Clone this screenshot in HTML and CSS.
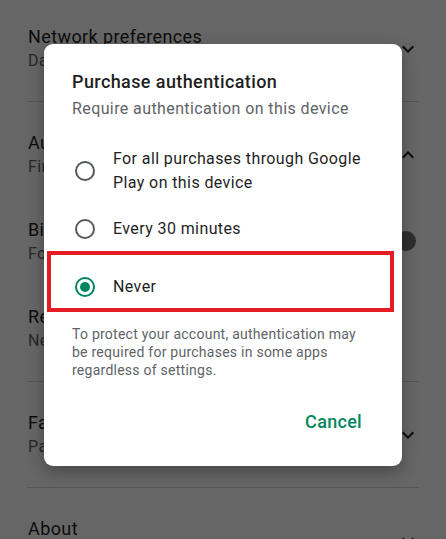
FILE: index.html
```html
<!DOCTYPE html>
<html lang="en">
<head>
    <meta charset="UTF-8">
    <meta name="viewport" content="width=device-width, initial-scale=1.0">
    <title>Settings</title>
    <link rel="stylesheet" href="styles.css">
</head>
<body>
    <div class="settings">
        <div class="section">
            <div class="item">
                <div class="item-text">
                    <div class="item-title">Network preferences</div>
                    <div class="item-sub">Data usage and downloads</div>
                </div>
                <svg class="chevron" viewBox="0 0 24 24"><path d="M16.59 8.59L12 13.17 7.41 8.59 6 10l6 6 6-6z"/></svg>
            </div>
        </div>
        <div class="section">
            <div class="item">
                <div class="item-text">
                    <div class="item-title">Authentication</div>
                    <div class="item-sub">Fingerprint, purchase authentication</div>
                </div>
                <svg class="chevron" viewBox="0 0 24 24"><path d="M7.41 15.41L12 10.83l4.59 4.58L18 14l-6-6-6 6z"/></svg>
            </div>
            <div class="item">
                <div class="item-text">
                    <div class="item-title">Biometric authentication</div>
                    <div class="item-sub">For all purchases on Google Play</div>
                </div>
                <div class="toggle"><span class="thumb"></span></div>
            </div>
            <div class="item">
                <div class="item-text">
                    <div class="item-title">Require authentication for purchases</div>
                    <div class="item-sub">Never</div>
                </div>
            </div>
        </div>
        <div class="section">
            <div class="item">
                <div class="item-text">
                    <div class="item-title">Family</div>
                    <div class="item-sub">Parental controls, family library</div>
                </div>
                <svg class="chevron" viewBox="0 0 24 24"><path d="M16.59 8.59L12 13.17 7.41 8.59 6 10l6 6 6-6z"/></svg>
            </div>
        </div>
        <div class="section">
            <div class="item">
                <div class="item-text">
                    <div class="item-title">About</div>
                    <div class="item-sub">Play Store version</div>
                </div>
                <svg class="chevron" viewBox="0 0 24 24"><path d="M16.59 8.59L12 13.17 7.41 8.59 6 10l6 6 6-6z"/></svg>
            </div>
        </div>
    </div>

    <div class="scrim"></div>

    <div class="dialog">
        <h2 class="dialog-title">Purchase authentication</h2>
        <p class="dialog-sub">Require authentication on this device</p>
        <div class="options">
            <label class="option">
                <span class="radio"></span>
                <span class="option-label">For all purchases through Google Play on this device</span>
            </label>
            <label class="option">
                <span class="radio"></span>
                <span class="option-label">Every 30 minutes</span>
            </label>
            <label class="option">
                <span class="radio checked"></span>
                <span class="option-label">Never</span>
            </label>
        </div>
        <p class="dialog-note">To protect your account, authentication may be required for purchases in some apps regardless of settings.</p>
        <div class="actions">
            <button class="text-btn">Cancel</button>
        </div>
        <div class="highlight"></div>
    </div>
</body>
</html>
```

FILE: styles.css
```css
:root {
    --green: #01875f;
    --text: #1f1f1f;
    --muted: #5f6368;
}

html {
    overflow: hidden;
}

body {
    margin: 0;
    width: 446px;
    height: 539px;
    overflow: hidden;
    position: relative;
    background-color: #fff;
    font-family: Roboto, "Noto Sans", sans-serif;
    color: var(--text);
}

/* settings list behind the dialog */
.settings {
    margin-top: -4px;
    padding: 0 27px;
}

.section {
    padding: 11px 0 7px;
    border-bottom: 1px solid #d8d8d8;
}

.item {
    display: flex;
    align-items: center;
    justify-content: space-between;
    padding: 18px 0 21px 1px;
}

.item-text {
    white-space: nowrap;
    overflow: hidden;
}

.item-title {
    font-size: 18px;
    line-height: 24px;
    letter-spacing: 0.4px;
}

.item-sub {
    font-size: 16px;
    line-height: 24px;
    letter-spacing: 0.4px;
    color: var(--muted);
}

.chevron {
    width: 24px;
    height: 24px;
    flex-shrink: 0;
    margin-right: -1px;
    fill: var(--text);
}

.toggle {
    width: 36px;
    height: 14px;
    border-radius: 7px;
    background-color: #9fd3c0;
    position: relative;
    flex-shrink: 0;
    margin-right: 5px;
}

.toggle .thumb {
    position: absolute;
    right: -2px;
    top: -4px;
    width: 20px;
    height: 20px;
    border-radius: 50%;
    background-color: #737373;
}

.scrim {
    position: absolute;
    inset: 0;
    background-color: rgba(0, 0, 0, 0.6);
}

/* dialog */
.dialog {
    position: absolute;
    left: 44px;
    top: 44px;
    width: 358px;
    box-sizing: border-box;
    padding: 26px 30px 27px 28px;
    background-color: #fff;
    border-radius: 9px;
    box-shadow: 0 6px 16px rgba(0, 0, 0, 0.3);
}

.dialog-title {
    margin: 0;
    font-size: 18px;
    font-weight: 500;
    line-height: 24px;
    letter-spacing: 0.4px;
    color: #1f1f1f;
}

.dialog-sub {
    margin: 3px 0 0;
    font-size: 16px;
    line-height: 24px;
    letter-spacing: 0.4px;
    color: var(--muted);
}

.options {
    margin-top: 21px;
}

.option {
    display: flex;
    align-items: center;
    gap: 16px;
    min-height: 58px;
}

.radio {
    width: 20px;
    height: 20px;
    margin: 2px 2px 2px 3px;
    box-sizing: border-box;
    border: 2px solid #55595d;
    border-radius: 50%;
    flex-shrink: 0;
    position: relative;
}

.radio.checked {
    border-color: var(--green);
}

.radio.checked::after {
    content: "";
    position: absolute;
    left: 3px;
    top: 3px;
    width: 10px;
    height: 10px;
    border-radius: 50%;
    background-color: var(--green);
}

.option-label {
    font-size: 16px;
    line-height: 24px;
    letter-spacing: 0.4px;
    color: #1f1f1f;
}

.dialog-note {
    margin: 9px 0 0;
    font-size: 14px;
    line-height: 18px;
    letter-spacing: 0.25px;
    color: var(--muted);
}

.actions {
    display: flex;
    justify-content: flex-end;
    margin-top: 24px;
}

.text-btn {
    font-family: inherit;
    font-size: 18px;
    font-weight: 500;
    letter-spacing: 0.3px;
    color: var(--green);
    background: none;
    border: none;
    padding: 0 8px;
    height: 36px;
    margin-right: 2px;
}

/* red marker around the chosen option */
.highlight {
    position: absolute;
    left: 3px;
    top: 207px;
    width: 347px;
    height: 61px;
    box-sizing: border-box;
    border: 4px solid #e51c24;
}
```
